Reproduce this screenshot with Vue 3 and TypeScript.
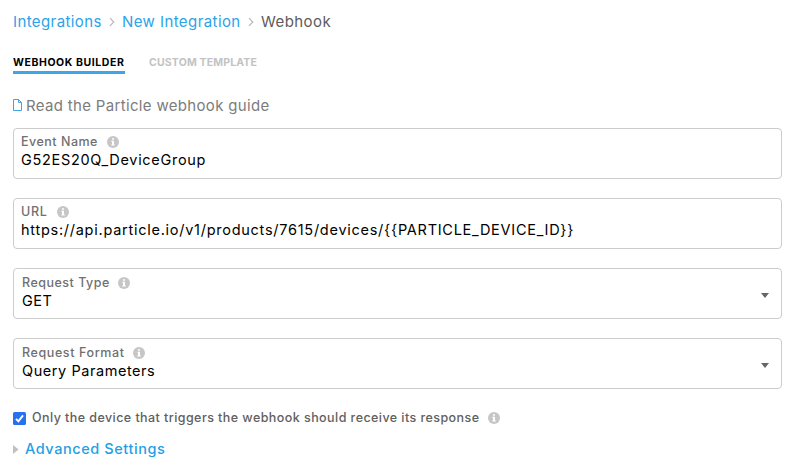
<script setup lang="ts">
interface Field {
  id: string
  label: string
  value: string
  select: boolean
}

const fields: Field[] = [
  { id: 'event', label: 'Event Name', value: 'G52ES20Q_DeviceGroup', select: false },
  {
    id: 'url',
    label: 'URL',
    value: 'https://api.particle.io/v1/products/7615/devices/{{PARTICLE_DEVICE_ID}}',
    select: false,
  },
  { id: 'type', label: 'Request Type', value: 'GET', select: true },
  { id: 'format', label: 'Request Format', value: 'Query Parameters', select: true },
]
</script>

<template>
  <main class="page">
    <nav class="crumbs">
      <a class="crumb first">Integrations</a>
      <svg class="chevron" viewBox="0 0 6 10"><path d="M1 1.2 4.8 5 1 8.8" /></svg>
      <a class="crumb second">New Integration</a>
      <svg class="chevron" viewBox="0 0 6 10"><path d="M1 1.2 4.8 5 1 8.8" /></svg>
      <span class="crumb current">Webhook</span>
    </nav>

    <div class="tabs">
      <span class="tab active">WEBHOOK BUILDER</span>
      <span class="tab custom">CUSTOM TEMPLATE</span>
    </div>

    <a class="guide">
      <svg class="doc" viewBox="0 0 9 12"><path d="M.5.5h5l3 3v8h-8zM5.5.5v3h3" /></svg>
      <span>Read the Particle webhook guide</span>
    </a>

    <section v-for="f in fields" :key="f.id" class="field" :class="[f.id, { select: f.select }]">
      <div class="content">
        <div class="label">
          <span>{{ f.label }}</span>
          <svg class="info" viewBox="0 0 12 12">
            <circle cx="6" cy="6" r="6" />
            <path d="M5 2.2h2v1.6H5zM4.3 4.8H7v3.7h.8v1H4.3v-1H5V5.8h-.7z" />
          </svg>
        </div>
        <div class="value">{{ f.value }}</div>
      </div>
      <svg v-if="f.select" class="caret" viewBox="0 0 8 5"><path d="M0 0h8L4 5z" /></svg>
    </section>

    <label class="check">
      <svg class="box" viewBox="0 0 13 13">
        <rect width="13" height="13" rx="1.6" />
        <path d="m3 6.8 2.4 2.5L10 3.3" />
      </svg>
      <span>Only the device that triggers the webhook should receive its response</span>
      <svg class="info" viewBox="0 0 12 12">
        <circle cx="6" cy="6" r="6" />
        <path d="M5 2.2h2v1.6H5zM4.3 4.8H7v3.7h.8v1H4.3v-1H5V5.8h-.7z" />
      </svg>
    </label>

    <div class="advanced">
      <svg viewBox="0 0 6 9"><path d="M0 0 5.5 4.5 0 9z" /></svg>
      <span>Advanced Settings</span>
    </div>
  </main>
</template>

<style>
body {
  background: #fff;
}
</style>

<style scoped>
.page {
  box-sizing: border-box;
  width: 800px;
  height: 469px;
  padding: 12px 18px 0 13px;
  overflow: hidden;
  font-family: Inter, "Liberation Sans", sans-serif;
  color: #000;
  white-space: nowrap;
}

svg {
  display: block;
  flex: none;
}

.crumbs {
  display: flex;
  align-items: center;
  height: 20px;
  font-size: 15px;
  line-height: 20px;
}

.crumb {
  color: #2ba3e9;
}

.first {
  width: 96px;
  letter-spacing: 0.4px;
}

.second {
  width: 126px;
  letter-spacing: 0.42px;
}

.current {
  color: #5c5c5c;
  letter-spacing: 0.45px;
}

.chevron {
  width: 6px;
  height: 10px;
  margin-right: 7px;
  fill: none;
  stroke: #b8b8b8;
  stroke-width: 1.2;
}

.tabs {
  display: flex;
  gap: 24px;
  height: 19px;
  margin-top: 23px;
  font-size: 10.5px;
  font-weight: 700;
  line-height: 16px;
}

.tab {
  box-sizing: border-box;
  width: 112px;
  height: 19px;
  letter-spacing: 0.588px;
}

.active {
  border-bottom: 3px solid #3ea6e6;
}

.custom {
  color: #c3c3c3;
  letter-spacing: 0.165px;
}

.guide {
  display: flex;
  align-items: center;
  gap: 4px;
  height: 20px;
  margin: 22px 0 12px;
  color: #7c7c7c;
  font-size: 15px;
  line-height: 20px;
  letter-spacing: 0.33px;
}

.doc {
  width: 9px;
  height: 12px;
  margin-bottom: 2px;
  fill: none;
  stroke: #3ea6e6;
}

.field {
  display: flex;
  align-items: center;
  justify-content: space-between;
  box-sizing: border-box;
  height: 51px;
  margin-bottom: 19px;
  padding: 0 12px 0 7px;
  border: 1px solid #ccc;
  border-radius: 4px;
}

.content {
  align-self: flex-start;
  padding-top: 4px;
}

.select .content {
  padding: 5px 0 0 1px;
}

.label {
  display: flex;
  align-items: center;
  gap: 9px;
  height: 17px;
  color: #707070;
  font-size: 12.5px;
  font-weight: 500;
  line-height: 17px;
  letter-spacing: 0.5px;
}

.info {
  width: 12px;
  height: 12px;
}

.info circle {
  fill: #c6c6c6;
}

.info path {
  fill: #fff;
}

.value {
  height: 20px;
  font-size: 14.5px;
  line-height: 20px;
  letter-spacing: 0.69px;
}

.url .label {
  letter-spacing: 0.7px;
}

.url .value {
  letter-spacing: 0.735px;
}

.type .label {
  gap: 8px;
}

.type .value {
  letter-spacing: 0.5px;
}

.format .label {
  gap: 8px;
  letter-spacing: 0.6px;
}

.format .value {
  letter-spacing: 0.56px;
}

.caret {
  width: 8px;
  height: 5px;
  margin-top: 4px;
  fill: #666;
}

.check {
  display: flex;
  align-items: center;
  height: 18px;
  margin-top: 20px;
  color: #606060;
  font-size: 12.5px;
  font-weight: 500;
  line-height: 18px;
  letter-spacing: 0.438px;
}

.check .info {
  margin-left: 8px;
}

.box {
  width: 13px;
  height: 13px;
  margin-right: 6px;
}

.box rect {
  fill: #2872f0;
}

.box path {
  fill: none;
  stroke: #fff;
  stroke-width: 1.9;
}

.advanced {
  display: flex;
  align-items: center;
  gap: 6px;
  height: 20px;
  margin-top: 12px;
  color: #249fe6;
  font-size: 14.5px;
  font-weight: 500;
  line-height: 20px;
  letter-spacing: 0.57px;
}

.advanced svg {
  width: 6px;
  height: 9px;
  fill: #c0c0c0;
}
</style>
